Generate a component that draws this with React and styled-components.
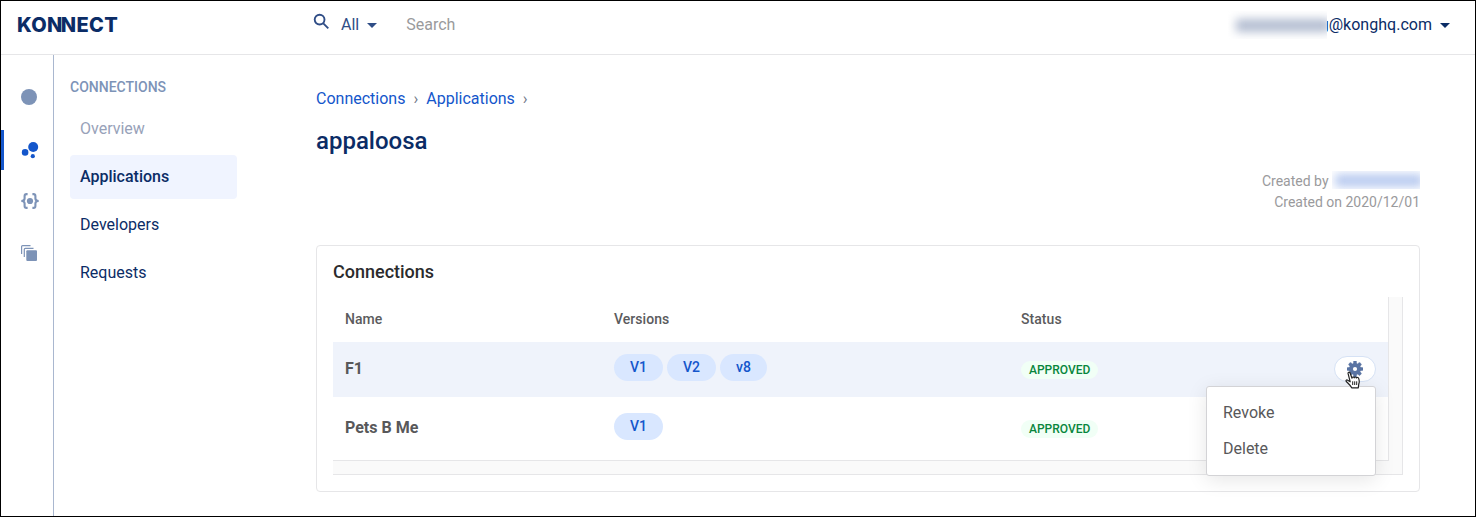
import React from "react";
import styled, { createGlobalStyle } from "styled-components";

const Global = createGlobalStyle`
  *, *::before, *::after { box-sizing: border-box; }
  body { margin: 0; background: #fff; font-family: Roboto, "Liberation Sans", sans-serif; overflow: hidden; }
  button { font: inherit; }
`;

const Window = styled.div`
  width: 1476px;
  height: 517px;
  border: 1px solid #000;
  background: #fff;
  display: flex;
  flex-direction: column;
  color: #0b2c66;
  font-size: 16px;
  line-height: 20px;
`;

const Header = styled.header`
  height: 54px;
  flex: none;
  display: flex;
  align-items: flex-start;
  padding: 14px 25px 0 16px;
  border-bottom: 1px solid #e6e6e8;
`;

const Logo = styled.div`
  width: 296px;
  font: 800 20px/20px Inter, sans-serif;
  letter-spacing: 0.35px;
  color: #0b2c66;
`;

const Tight = styled.span`
  letter-spacing: -1.6px;
`;

const SearchIcon = styled.svg`
  margin: -2px 11px 0 0;
`;

const Scope = styled.div`
  display: flex;
  align-items: center;
  gap: 8px;
  color: #2f4d86;
`;

const Caret = styled.span`
  border: 5.5px solid transparent;
  border-top: 5.5px solid ${(p) => p.$color};
  border-bottom: 0;
`;

const SearchHint = styled.div`
  margin-left: 29px;
  flex: 1;
  color: #9a9a9c;
`;

const Account = styled.div`
  display: flex;
  align-items: center;
  height: 20px;
  letter-spacing: 0.02px;
`;

const AccountCaret = styled(Caret)`
  margin-left: 8px;
`;

const Redacted = styled.span`
  position: relative;
  display: inline-flex;
  align-items: center;
  overflow: hidden;
  width: ${(p) => p.$width}px;
  height: ${(p) => p.$height}px;
  padding-left: ${(p) => p.$inset}px;
  margin-right: -${(p) => p.$overlap || 0}px;
  background: #fff;
  &::before {
    content: "";
    flex: 1;
    height: 13px;
    margin-right: -3px;
    background: ${(p) => p.$color};
    filter: blur(5px);
  }
`;

const Body = styled.div`
  flex: 1;
  min-height: 0;
  display: flex;
`;

const Rail = styled.nav`
  width: 53px;
  border-right: 1px solid #a9b7cf;
  padding-top: 22px;
  display: flex;
  flex-direction: column;
  gap: 12px;
`;

const RailItem = styled.div`
  height: 40px;
  display: flex;
  align-items: center;
  padding-left: ${(p) => (p.$active ? 17 : 20)}px;
  border-left: ${(p) => (p.$active ? "3px solid #1456cb" : "0")};
  color: ${(p) => (p.$active ? "#1456cb" : "#7d93b7")};
  ${(p) => p.$active && "margin: 1px 0 -1px;"}
  svg { display: block; }
`;

const Sidebar = styled.aside`
  width: 183px;
  padding: 22px 0 0 16px;
`;

const SidebarTitle = styled.div`
  font-size: 14px;
  font-weight: 500;
  color: #7d93b7;
  margin-bottom: 10px;
`;

const NavItem = styled.div`
  height: 44px;
  margin-bottom: 4px;
  padding: 12px 10px;
  border-radius: 4px;
  font-weight: ${(p) => (p.$active ? 500 : 400)};
  background: ${(p) => (p.$active ? "#f0f4ff" : "transparent")};
  color: ${(p) => (p.$muted ? "#98a2b9" : "#0b2c66")};
`;

const Main = styled.main`
  flex: 1;
  padding: 34px 55px 0 79px;
`;

const Breadcrumbs = styled.div`
  display: flex;
  gap: 8px;
  color: #1456cb;
`;

const Separator = styled.span`
  color: #6f7787;
`;

const Title = styled.h1`
  margin: 16px 0 0;
  font-size: 24px;
  line-height: 32px;
  font-weight: 500;
  color: #0b2c66;
`;

const Meta = styled.div`
  margin-top: 14px;
  display: flex;
  flex-direction: column;
  align-items: flex-end;
  font-size: 14px;
  line-height: 21px;
  color: #9a9a9c;
`;

const MetaLine = styled.div`
  display: flex;
  height: 21px;
`;

const Card = styled.section`
  margin-top: 32px;
  height: 247px;
  border: 1px solid #e6e6e8;
  border-radius: 4px;
  padding: 15px 16px;
`;

const CardTitle = styled.h2`
  margin: 0 0 14px;
  font-size: 18px;
  line-height: 22px;
  font-weight: 500;
  color: #2b2b2d;
`;

const Scroller = styled.div`
  height: 178px;
  background: #fafafa;
  border: solid #e6e6e8;
  border-width: 0 1px 1px 0;
  padding: 0 13px 13px 0;
`;

const Table = styled.div`
  height: 164px;
  background: #fff;
  border: solid #e6e6e8;
  border-width: 0 1px 1px 0;
`;

const Row = styled.div`
  position: relative;
  display: grid;
  grid-template-columns: 269px 407px 1fr 42px;
  padding: ${(p) => p.$top}px 12px 0;
  height: ${(p) => p.$height}px;
  background: ${(p) => (p.$highlight ? "#eff3fb" : "transparent")};
`;

const HeadCell = styled.div`
  font-size: 14px;
  font-weight: 500;
  color: #5b5b5d;
  letter-spacing: 0.05px;
`;

const Name = styled.div`
  padding-top: 5px;
  font-weight: 700;
  color: #58585a;
`;

const Pills = styled.div`
  display: flex;
  align-items: flex-start;
  gap: 4px;
`;

const Pill = styled.span`
  height: 27px;
  padding: 0 16px;
  border-radius: 14px;
  font-size: 14px;
  line-height: 27px;
  font-weight: 500;
  background: #d9e7ff;
  color: #1456cb;
`;

const Badge = styled.span`
  display: inline-block;
  margin-top: 7px;
  height: 18px;
  padding: 0 8px;
  border-radius: 9px;
  font-size: 12px;
  line-height: 18px;
  font-weight: 500;
  background: #f1fff6;
  color: #07863c;
`;

const GearButton = styled.button`
  width: 42px;
  height: 26px;
  margin-top: 2px;
  padding: 0;
  border: 1px solid #d6e2f5;
  border-radius: 13px;
  background: #fff;
  display: flex;
  align-items: center;
  justify-content: center;
`;

const Menu = styled.div`
  position: absolute;
  z-index: 1;
  top: 44px;
  right: 12px;
  width: 170px;
  height: 90px;
  padding: 8px 0;
  border: 1px solid #d3d3d6;
  border-radius: 3px;
  background: #fff;
  box-shadow: 0 4px 20px rgba(0, 0, 0, 0.1);
`;

const MenuItem = styled.div`
  padding: 8px 16px;
  color: #58585a;
`;

const Pointer = styled.svg`
  position: absolute;
  z-index: 2;
  right: 27px;
  top: 29px;
`;

const gearTeeth = [0, 45, 90, 135];

function Gear() {
  return (
    <svg width="16" height="16" viewBox="0 0 16 16" fill="#5a74a3">
      {gearTeeth.map((angle) => (
        <rect key={angle} x="6.3" y="0" width="3.4" height="16" rx=".6" transform={`rotate(${angle} 8 8)`} />
      ))}
      <circle cx="8" cy="8" r="6" />
      <circle cx="8" cy="8" r="2.1" fill="#fff" />
    </svg>
  );
}

function Hand() {
  return (
    <Pointer width="16" height="18" viewBox="0 0 16 18" fill="#fff" stroke="#222" strokeWidth="1.2" strokeLinejoin="round">
      <path d="M5.2 10.8 3.1 2.7C2.8 1.2 4.5.6 5.1 2L7 7.2C7 5.8 8.9 5.6 9.2 6.8 9.6 5.6 11.1 5.8 11.4 7 12 6 13.6 6.5 13.8 7.7 14.3 9.6 14.6 11.2 13.8 12.8L13.3 16.8H6.7C6 14.8 3.7 13 1.3 10.5.5 9.4 1.6 8.5 2.7 9.2Z" />
      <path d="M7.7 10.3V14M9.7 10.3V14M11.7 10.3V14" fill="none" strokeWidth="1" />
    </Pointer>
  );
}

const rows = [
  { name: "F1", versions: ["V1", "V2", "v8"], top: 12, height: 55, open: true },
  { name: "Pets B Me", versions: ["V1"], top: 16, height: 63 },
];

const navItems = ["Overview", "Applications", "Developers", "Requests"];

export default function App() {
  return (
    <>
      <Global />
      <Window>
        <Header>
          <Logo>KO<Tight>N</Tight>NECT</Logo>
          <SearchIcon width="17" height="17" viewBox="0 0 17 17" fill="none" stroke="#2f4d86" strokeWidth="1.9">
            <circle cx="6.6" cy="6.6" r="4.9" />
            <path d="m10.3 10.3 5 5" />
          </SearchIcon>
          <Scope>All <Caret $color="#2f4d86" /></Scope>
          <SearchHint>Search</SearchHint>
          <Account>
            <Redacted $width={99} $height={28} $inset={8} $overlap={7} $color="#b3bdd1" />
            g@konghq.com
            <AccountCaret $color="#0b2c66" />
          </Account>
        </Header>
        <Body>
          <Rail>
            <RailItem>
              <svg width="16" height="16" viewBox="0 0 16 16" fill="currentColor"><circle cx="8" cy="8" r="8" /></svg>
            </RailItem>
            <RailItem $active>
              <svg width="18" height="18" viewBox="0 0 18 18" fill="currentColor">
                <circle cx="12.2" cy="6" r="5" />
                <circle cx="4.1" cy="11.4" r="3.3" />
                <circle cx="11.8" cy="15.2" r="2.1" />
              </svg>
            </RailItem>
            <RailItem>
              <svg width="18" height="16" viewBox="0 0 18 16" fill="none" stroke="currentColor" strokeWidth="2.1">
                <path d="M6.6 1.1H5.5Q3.6 1.1 3.6 3V5.5Q3.6 8 .3 8 3.6 8 3.6 10.5V13Q3.6 14.9 5.5 14.9H6.6M11.4 1.1h1.1q1.9 0 1.9 1.9v2.5Q14.4 8 17.7 8 14.4 8 14.4 10.5V13q0 1.9-1.9 1.9h-1.1" />
                <circle cx="9" cy="8" r="3.1" fill="currentColor" stroke="none" />
              </svg>
            </RailItem>
            <RailItem>
              <svg width="16" height="16" viewBox="0 0 16 16" fill="none" stroke="currentColor" strokeWidth="1.2">
                <path d="M.6 9V1.6Q.6.6 1.6.6H9.5M3.3 12V4.3Q3.3 3.3 4.3 3.3H12.5" />
                <rect x="5.3" y="5.3" width="10.7" height="10.7" rx="1" fill="currentColor" stroke="none" />
              </svg>
            </RailItem>
          </Rail>
          <Sidebar>
            <SidebarTitle>CONNECTIONS</SidebarTitle>
            {navItems.map((item) => (
              <NavItem key={item} $active={item === "Applications"} $muted={item === "Overview"}>{item}</NavItem>
            ))}
          </Sidebar>
          <Main>
            <Breadcrumbs>
              <span>Connections</span><Separator>›</Separator>
              <span>Applications</span><Separator>›</Separator>
            </Breadcrumbs>
            <Title>appaloosa</Title>
            <Meta>
              <MetaLine>Created by&nbsp;<Redacted $width={88} $height={18} $inset={3} $color="#b9cbf0" /></MetaLine>
              <MetaLine>Created on 2020/12/01</MetaLine>
            </Meta>
            <Card>
              <CardTitle>Connections</CardTitle>
              <Scroller>
                <Table>
                  <Row $top={12} $height={45}>
                    <HeadCell>Name</HeadCell>
                    <HeadCell>Versions</HeadCell>
                    <HeadCell>Status</HeadCell>
                  </Row>
                  {rows.map((row) => (
                    <Row key={row.name} $top={row.top} $height={row.height} $highlight={row.open}>
                      <Name>{row.name}</Name>
                      <Pills>{row.versions.map((v) => <Pill key={v}>{v}</Pill>)}</Pills>
                      <div><Badge>APPROVED</Badge></div>
                      {row.open && (
                        <>
                          <GearButton aria-label="Actions"><Gear /></GearButton>
                          <Menu>
                            <MenuItem>Revoke</MenuItem>
                            <MenuItem>Delete</MenuItem>
                          </Menu>
                          <Hand />
                        </>
                      )}
                    </Row>
                  ))}
                </Table>
              </Scroller>
            </Card>
          </Main>
        </Body>
      </Window>
    </>
  );
}
